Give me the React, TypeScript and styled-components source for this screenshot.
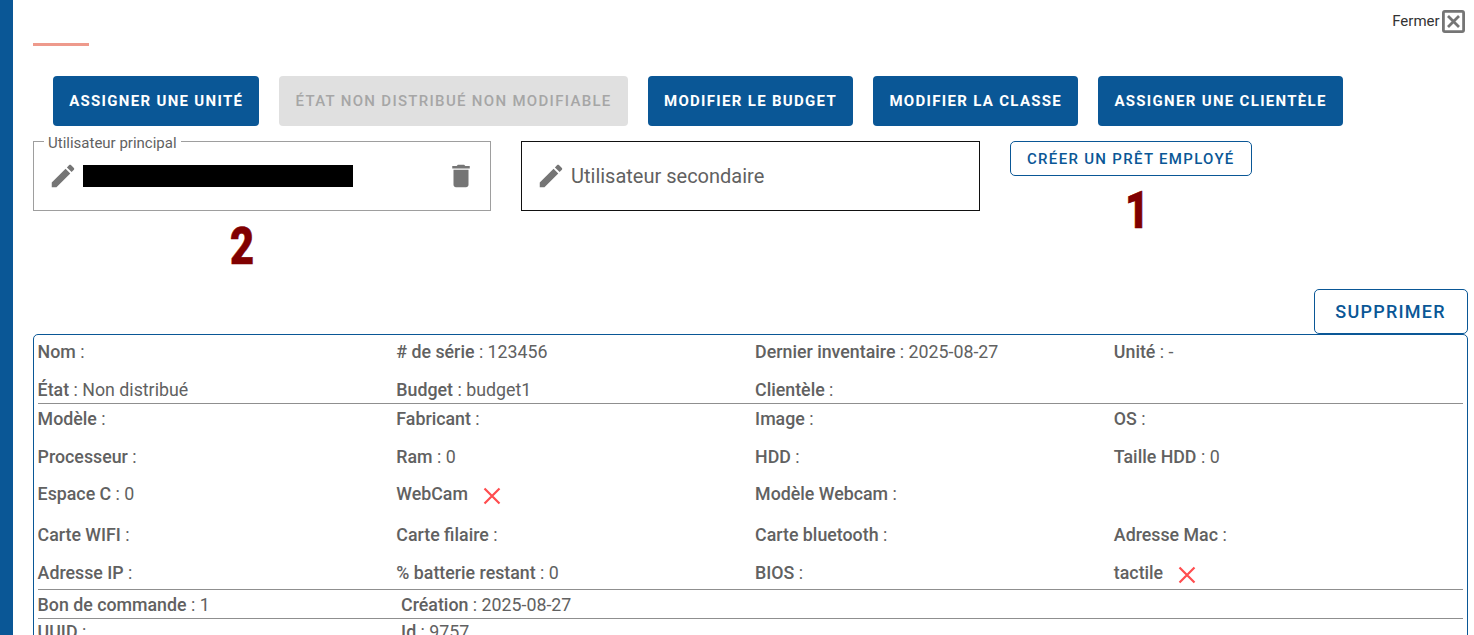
import React from 'react';
import styled, { createGlobalStyle } from 'styled-components';

const GlobalStyle = createGlobalStyle`
  html, body {
    margin: 0;
    height: 635px;
    overflow: hidden;
    background: #fff;
    font-family: Roboto, "Liberation Sans", sans-serif;
  }
`;

const blue = '#0a5796';
const grey = '#616161';

type Field = { label: string; value?: string; cross?: boolean };

const topFields: Field[][] = [
  [
    { label: 'Nom' },
    { label: '# de série', value: '123456' },
    { label: 'Dernier inventaire', value: '2025-08-27' },
    { label: 'Unité', value: '-' },
  ],
  [
    { label: 'État', value: 'Non distribué' },
    { label: 'Budget', value: 'budget1' },
    { label: 'Clientèle' },
  ],
];

const hardwareFields: Field[][] = [
  [{ label: 'Modèle' }, { label: 'Fabricant' }, { label: 'Image' }, { label: 'OS' }],
  [
    { label: 'Processeur' },
    { label: 'Ram', value: '0' },
    { label: 'HDD' },
    { label: 'Taille HDD', value: '0' },
  ],
  [
    { label: 'Espace C', value: '0' },
    { label: 'WebCam', cross: true },
    { label: 'Modèle Webcam' },
  ],
  [
    { label: 'Carte WIFI' },
    { label: 'Carte filaire' },
    { label: 'Carte bluetooth' },
    { label: 'Adresse Mac' },
  ],
  [
    { label: 'Adresse IP' },
    { label: '% batterie restant', value: '0' },
    { label: 'BIOS' },
    { label: 'tactile', cross: true },
  ],
];

const EditIcon = () => (
  <IconSvg viewBox="0 0 24 24">
    <path d="M3 17.25V21h3.75L17.81 9.94l-3.75-3.75L3 17.25zM20.71 7.04c.39-.39.39-1.02 0-1.41l-2.34-2.34c-.39-.39-1.02-.39-1.41 0l-1.83 1.83 3.75 3.75 1.83-1.83z" />
  </IconSvg>
);

const DeleteIcon = () => (
  <IconSvg viewBox="0 0 24 24">
    <path d="M6 19c0 1.1.9 2 2 2h8c1.1 0 2-.9 2-2V7H6v12zM19 4h-3.5l-1-1h-5l-1 1H5v2h14V4z" />
  </IconSvg>
);

function FieldCell({ field }: { field: Field }) {
  if (field.cross) {
    return (
      <Cell>
        <Label>{field.label}</Label>
        <CrossIcon viewBox="0 0 18 18">
          <path d="M1.5 1.5l15 15M16.5 1.5l-15 15" />
        </CrossIcon>
      </Cell>
    );
  }
  return (
    <Cell>
      <Label>{field.label}</Label> : {field.value}
    </Cell>
  );
}

function FieldGrid({ rows }: { rows: Field[][] }) {
  return (
    <Grid>
      {rows.flat().map((field) => (
        <FieldSlot key={field.label} $wide={field.label === 'Modèle Webcam' || field.label === 'Clientèle'}>
          <FieldCell field={field} />
        </FieldSlot>
      ))}
    </Grid>
  );
}

export default function App() {
  return (
    <Page>
      <GlobalStyle />
      <SideBar />
      <Main>
        <CloseRow>
          <CloseLabel>Fermer</CloseLabel>
          <CloseIcon viewBox="0 0 23 23">
            <rect x="1.4" y="1.4" width="20.2" height="20.2" rx="1.5" />
            <path d="M6 6l11 11M17 6L6 17" />
          </CloseIcon>
        </CloseRow>
        <TitleRule />
        <Toolbar>
          <FilledButton>Assigner une unité</FilledButton>
          <FilledButton disabled>État non distribué non modifiable</FilledButton>
          <FilledButton>Modifier le budget</FilledButton>
          <FilledButton>Modifier la classe</FilledButton>
          <FilledButton>Assigner une clientèle</FilledButton>
        </Toolbar>
        <UsersRow>
          <PrimaryUser>
            <UserLegend>Utilisateur principal</UserLegend>
            <EditIcon />
            <Redacted />
            <DeleteSlot>
              <DeleteIcon />
            </DeleteSlot>
          </PrimaryUser>
          <SecondaryUser>
            <EditIcon />
            <SecondaryText>Utilisateur secondaire</SecondaryText>
          </SecondaryUser>
          <LoanButton>Créer un prêt employé</LoanButton>
          <Annotation $left={197} $top={77}>2</Annotation>
          <Annotation $left={1092} $top={41}>1</Annotation>
        </UsersRow>
        <DeleteRow>
          <DeleteButton>Supprimer</DeleteButton>
        </DeleteRow>
        <Details>
          <FieldGrid rows={topFields} />
          <Divider $above={4} $below={5} />
          <FieldGrid rows={hardwareFields} />
          <Divider $above={3} $below={5} />
          <FooterRow>
            <FooterCell $width={363.5}>
              <Label>Bon de commande</Label> : 1
            </FooterCell>
            <FooterCell>
              <Label>Création</Label> : 2025-08-27
            </FooterCell>
          </FooterRow>
          <Divider $above={4} $below={3} />
          <FooterRow>
            <FooterCell $width={363.5}>
              <Label>UUID</Label> :
            </FooterCell>
            <FooterCell>
              <Label>Id</Label> : 9757
            </FooterCell>
          </FooterRow>
        </Details>
      </Main>
    </Page>
  );
}

const Page = styled.div`
  display: flex;
  height: 635px;
  overflow: hidden;
`;

const SideBar = styled.div`
  flex: 0 0 13px;
  background: ${blue};
`;

const Main = styled.div`
  flex: 1;
  padding: 10px 7px 0 20px;
`;

const CloseRow = styled.div`
  display: flex;
  justify-content: flex-end;
  align-items: center;
  gap: 2px;
  height: 23px;
  padding-right: 2px;
`;

const CloseLabel = styled.span`
  margin-top: -2px;
  font-size: 15px;
  color: #333;
`;

const CloseIcon = styled.svg`
  width: 23px;
  height: 23px;
  margin-right: 1px;
  fill: none;
  stroke: #757575;
  stroke-width: 2.8;
`;

const TitleRule = styled.div`
  width: 56px;
  height: 3px;
  margin-top: 10px;
  background: #ee9a8c;
`;

const Toolbar = styled.div`
  display: flex;
  gap: 20px;
  margin-top: 30px;
  padding-left: 20px;
`;

const FilledButton = styled.button`
  height: 50px;
  padding: 0 16.15px;
  border: 0;
  border-radius: 4px;
  background: ${blue};
  color: #fff;
  font-family: inherit;
  font-size: 15px;
  font-weight: 700;
  letter-spacing: 1.31px;
  text-transform: uppercase;

  &:disabled {
    background: #e0e0e0;
    color: #a6a6a6;
    font-weight: 500;
  }
`;

const UsersRow = styled.div`
  position: relative;
  display: flex;
  align-items: flex-start;
  margin-top: 14px;
  height: 71px;
`;

const PrimaryUser = styled.fieldset`
  box-sizing: border-box;
  display: flex;
  align-items: center;
  width: 458px;
  height: 80px;
  margin: -9px 0 0;
  padding: 0 14px 9px 14px;
  border: 1px solid #9e9e9e;
`;

const UserLegend = styled.legend`
  padding: 4px 4px 0;
  margin-left: -4px;
  font-size: 15px;
  line-height: 16px;
  color: ${grey};
`;

const IconSvg = styled.svg`
  flex: none;
  width: 30px;
  height: 30px;
  fill: #757575;
`;

const Redacted = styled.div`
  width: 270px;
  height: 22px;
  margin-left: 5px;
  background: #000;
`;

const DeleteSlot = styled.div`
  display: flex;
  margin-left: auto;
`;

const SecondaryUser = styled.div`
  box-sizing: border-box;
  display: flex;
  align-items: center;
  gap: 5px;
  width: 459px;
  height: 70px;
  margin: 1px 0 0 30px;
  padding-left: 14px;
  border: 1px solid #111;
`;

const SecondaryText = styled.span`
  font-size: 20px;
  color: ${grey};
`;

const LoanButton = styled.button`
  height: 35px;
  margin: 1px 0 0 30px;
  padding: 0 16px;
  border: 1px solid ${blue};
  border-radius: 5px;
  background: #fff;
  color: ${blue};
  font-family: inherit;
  font-size: 15px;
  font-weight: 500;
  letter-spacing: 1.31px;
  text-transform: uppercase;
`;

const Annotation = styled.span<{ $left: number; $top: number }>`
  position: absolute;
  left: ${(p) => p.$left}px;
  top: ${(p) => p.$top}px;
  font-family: Roboto, sans-serif;
  font-size: 52px;
  font-weight: 900;
  line-height: 60px;
  color: #800000;
  -webkit-text-stroke: 0.6px #800000;
  transform: scaleX(0.8);
  transform-origin: left center;
`;

const DeleteRow = styled.div`
  display: flex;
  justify-content: flex-end;
  margin-top: 78px;
`;

const DeleteButton = styled.button`
  width: 154px;
  height: 45px;
  border: 1px solid ${blue};
  border-radius: 5px;
  background: #fff;
  color: ${blue};
  font-family: inherit;
  font-size: 18px;
  font-weight: 500;
  letter-spacing: 1.25px;
  text-transform: uppercase;
`;

const Details = styled.div`
  box-sizing: border-box;
  height: 340px;
  padding: 7px 4px 0 3.6px;
  border: 1px solid ${blue};
  border-radius: 5px;
  font-size: 17.8px;
  line-height: 19.5px;
  color: ${grey};
`;

const Grid = styled.div`
  display: grid;
  grid-template-columns: repeat(4, 358.75px);
  row-gap: 18px;
  width: 1425px;
`;

const FieldSlot = styled.div<{ $wide?: boolean }>`
  min-width: 0;
  ${(p) => p.$wide && 'grid-column: span 2;'}
`;

const Cell = styled.div`
  white-space: pre-wrap;
`;

const Label = styled.b`
  font-weight: 500;
`;

const CrossIcon = styled.svg`
  display: inline-block;
  width: 18px;
  height: 18px;
  margin: 3px 0 2px 15px;
  vertical-align: top;
  fill: none;
  stroke: #ff4d4f;
  stroke-width: 2.2;
`;

const Divider = styled.div<{ $above: number; $below: number }>`
  height: 1px;
  margin: ${(p) => p.$above}px 0 ${(p) => p.$below}px;
  background: #8f8f8f;
`;

const FooterRow = styled.div`
  display: flex;
`;

const FooterCell = styled.div<{ $width?: number }>`
  ${(p) => p.$width && `flex: 0 0 ${p.$width}px;`}
`;
